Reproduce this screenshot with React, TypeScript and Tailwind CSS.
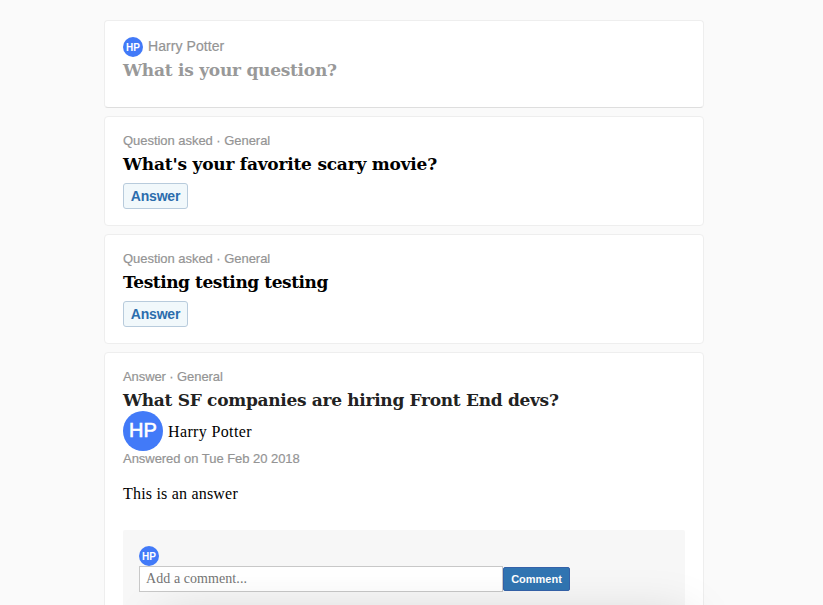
import React from 'react';

const sans = "font-['Liberation_Sans',sans-serif]";
const serif = "font-['Liberation_Serif',serif]";
const slab = "font-['DejaVu_Serif',serif]";

function Card({ className, children }: { className: string; children: React.ReactNode }) {
  return (
    <section
      className={`w-[600px] shrink-0 rounded-[4px] border border-[#eeeeee] bg-white px-[18px] ${className}`}
    >
      {children}
    </section>
  );
}

function SmallAvatar() {
  return (
    <div className={`${sans} flex size-5 shrink-0 items-center justify-center rounded-full bg-[#427af8] text-[10px] font-bold leading-none text-white`}>
      <span className="pt-px">HP</span>
    </div>
  );
}

function Meta({ children, className }: { children: React.ReactNode; className: string }) {
  return (
    <div className="flex h-4">
      <span className={`${sans} whitespace-nowrap text-[13px] leading-4 text-[#949494] [-webkit-text-stroke:0.2px_#949494] ${className}`}>{children}</span>
    </div>
  );
}

function Title({ children, className }: { children: React.ReactNode; className: string }) {
  return (
    <h2 className="flex h-[26px]">
      <span className={`${slab} whitespace-nowrap text-[17px] font-bold leading-[26px] ${className}`}>{children}</span>
    </h2>
  );
}

function Question({ title, spacing }: { title: string; spacing: string }) {
  return (
    <Card className="h-[110px] pt-4">
      <Meta className="tracking-[-0.04px]">Question asked · General</Meta>
      <Title className={`pt-0.5 text-black ${spacing}`}>{title}</Title>
      <button className={`${sans} mt-2 flex h-[26px] w-[65px] items-center justify-center rounded-[3px] border border-[#b8cbdc] bg-[#f1f8fb] text-[14px] font-bold tracking-[-0.2px] text-[#2b6dad]`}>
        <span>Answer</span>
      </button>
    </Card>
  );
}

export default function App() {
  return (
    <main className="relative flex h-[605px] w-[823px] flex-col gap-2 overflow-hidden bg-[#fafafa] pl-[104px] pt-5">
      <Card className="h-[88px] border-b-[#dedede] pt-4">
        <div className="flex h-5 items-center gap-[5px]">
          <SmallAvatar />
          <span className={`${sans} pb-0.5 text-[14px] leading-[18px] text-[#949494] [-webkit-text-stroke:0.2px_#949494] tracking-[0.07px]`}>Harry Potter</span>
        </div>
        <Title className="text-[#999999] tracking-[-0.25px]">What is your question?</Title>
      </Card>
      <Question title="What's your favorite scary movie?" spacing="tracking-[-0.22px]" />
      <Question title="Testing testing testing" spacing="tracking-[-0.44px]" />
      <Card className="h-[300px] pt-4">
        <Meta className="tracking-[-0.09px]">Answer · General</Meta>
        <Title className="pt-0.5 text-[#222222] tracking-[-0.3px]">What SF companies are hiring Front End devs?</Title>
        <div className="flex h-10 items-center gap-[5px]">
          <div className={`${sans} flex size-10 items-center justify-center rounded-full bg-[#427af8] pb-0.5 text-[20px] leading-none text-white [-webkit-text-stroke:0.6px_white]`}>HP</div>
          <span className={`${serif} pt-0.5 text-[16px] leading-5 tracking-[0.36px] text-black`}>Harry Potter</span>
        </div>
        <Meta className="tracking-[-0.04px]">Answered on Tue Feb 20 2018</Meta>
        <p className={`${serif} mt-[17px] flex h-5 text-[16px] leading-5 tracking-[0.2px] text-black`}><span>This is an answer</span></p>
        <div className="mt-[26px] h-[120px] rounded-[2px] bg-[#f7f7f7] px-4 pt-4">
          <SmallAvatar />
          <div className="flex items-center">
            <input
              placeholder="Add a comment..."
              className={`${serif} h-[26px] w-[364px] border border-[#c8c8c8] bg-white px-1.5 text-[14px] tracking-[0.07px] text-black placeholder:text-[#757575]`}
            />
            <button className={`${sans} flex h-6 w-[67px] items-center justify-center rounded-[2px] border border-[#3562a9] bg-[#3175b2] text-[11px] font-bold text-white`}>
              <span>Comment</span>
            </button>
          </div>
        </div>
      </Card>
      <div className="pointer-events-none absolute left-[162px] top-[618px] h-20 w-[526px] shadow-[0_0_50px_rgba(0,0,0,0.17)]" />
    </main>
  );
}
